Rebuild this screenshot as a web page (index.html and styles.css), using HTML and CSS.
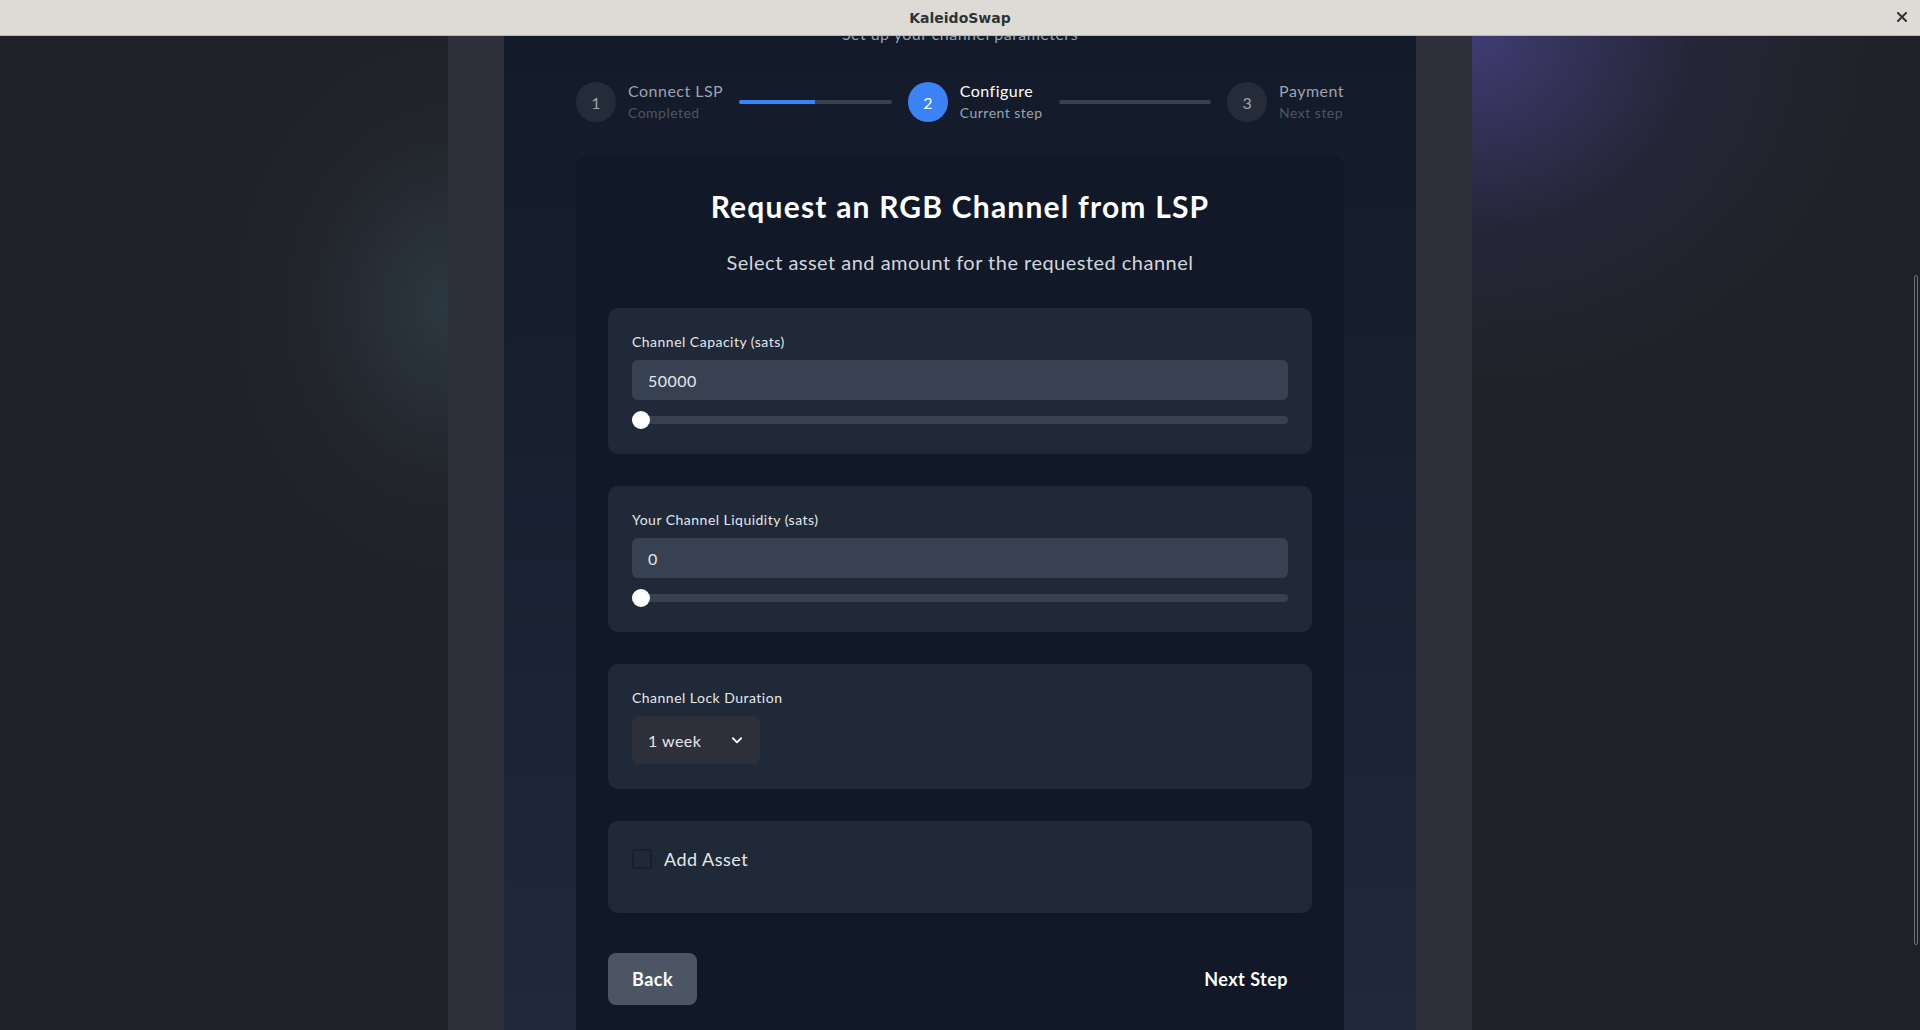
FILE: index.html
```html
<!DOCTYPE html>
<html lang="en">
<head>
<meta charset="utf-8">
<title>KaleidoSwap</title>
<link rel="stylesheet" href="styles.css">
</head>
<body>
<header class="titlebar">
  <span class="titlebar-title">KaleidoSwap</span>
  <button class="titlebar-close" aria-label="Close">
    <svg width="10" height="10" viewBox="0 0 10 10"><path d="M1 1 L9 9 M9 1 L1 9" stroke="#2e3436" stroke-width="2" stroke-linecap="square"/></svg>
  </button>
</header>
<div class="desktop">
  <div class="backdrop backdrop-left"></div>
  <div class="shell">
    <main class="panel">
      <div class="panel-content">
        <p class="page-subtitle">Set up your channel parameters</p>
        <ol class="stepper">
          <li class="step step-done">
            <span class="step-circle">1</span>
            <span class="step-text"><span class="step-name">Connect LSP</span><span class="step-state">Completed</span></span>
          </li>
          <li class="step-line"><span class="step-line-fill"></span></li>
          <li class="step step-current">
            <span class="step-circle">2</span>
            <span class="step-text"><span class="step-name">Configure</span><span class="step-state">Current step</span></span>
          </li>
          <li class="step-line"></li>
          <li class="step step-next">
            <span class="step-circle">3</span>
            <span class="step-text"><span class="step-name">Payment</span><span class="step-state">Next step</span></span>
          </li>
        </ol>
        <section class="card">
          <h1 class="card-title">Request an RGB Channel from LSP</h1>
          <p class="card-subtitle">Select asset and amount for the requested channel</p>

          <div class="field-box">
            <label class="field-label">Channel Capacity (sats)</label>
            <div class="text-input">50000</div>
            <div class="slider"><span class="slider-track"></span><span class="slider-thumb"></span></div>
          </div>

          <div class="field-box">
            <label class="field-label">Your Channel Liquidity (sats)</label>
            <div class="text-input">0</div>
            <div class="slider"><span class="slider-track"></span><span class="slider-thumb"></span></div>
          </div>

          <div class="field-box">
            <label class="field-label">Channel Lock Duration</label>
            <div class="select">
              <span>1 week</span>
              <svg width="14" height="14" viewBox="0 0 24 24" fill="none"><path d="M5 9 L12 16 L19 9" stroke="#ffffff" stroke-width="3.2" stroke-linecap="round" stroke-linejoin="round"/></svg>
            </div>
          </div>

          <div class="field-box field-box-asset">
            <div class="check-row">
              <span class="checkbox"></span>
              <span class="check-label">Add Asset</span>
            </div>
          </div>

          <div class="actions">
            <button class="btn btn-back">Back</button>
            <button class="btn btn-next">Next Step</button>
          </div>
        </section>
      </div>
    </main>
  </div>
  <div class="backdrop backdrop-right"></div>
  <div class="scrollbar"></div>
</div>
</body>
</html>
```
FILE: styles.css
```css
* { box-sizing: border-box; }
html, body { margin: 0; padding: 0; }
body {
  width: 1920px;
  height: 1030px;
  overflow: hidden;
  background: #202126;
  font-family: "Lato", "Noto Sans", sans-serif;
  letter-spacing: 0.03em;
  color: #e5e7eb;
}
p, h1, ol { margin: 0; padding: 0; }
ol { list-style: none; }
button { font-family: inherit; letter-spacing: inherit; border: 0; cursor: pointer; }

.titlebar {
  position: relative;
  height: 36px;
  background: #dedbd7;
  border-bottom: 1px solid #bdb7b0;
  display: flex;
  align-items: center;
  justify-content: center;
  letter-spacing: 0;
}
.titlebar-title {
  font-family: "DejaVu Sans", sans-serif;
  font-weight: bold;
  font-size: 14px;
  color: #2e3436;
}
.titlebar-close {
  position: absolute;
  right: 13px;
  top: 12px;
  width: 10px;
  height: 10px;
  padding: 0;
  background: transparent;
  display: flex;
}

.desktop {
  position: relative;
  display: flex;
  height: 994px;
}
.backdrop { flex: 1; }
.backdrop-left {
  background:
    radial-gradient(ellipse 260px 320px at 450px 270px, rgba(46, 60, 70, 0.85), rgba(38, 44, 54, 0.35) 55%, rgba(32, 33, 38, 0) 100%),
    #202126;
}
.backdrop-right {
  background:
    radial-gradient(ellipse 430px 380px at 0 0, rgba(64, 60, 115, 1), rgba(45, 42, 75, 0.5) 50%, rgba(32, 33, 38, 0) 100%),
    #202126;
}
.shell {
  width: 1024px;
  background: #2e2f3a;
  padding: 0 56px;
}
.panel {
  height: 100%;
  overflow: hidden;
  background: linear-gradient(to bottom, #131a2a, #1f2939);
  padding: 0 72px;
}
.panel-content { margin-top: -14px; }

.page-subtitle {
  text-align: center;
  font-size: 16px;
  line-height: 24px;
  color: #9ca3af;
}

.stepper {
  margin-top: 36px;
  display: flex;
  align-items: center;
  height: 40px;
}
.step { display: flex; align-items: center; gap: 12px; }
.step-circle {
  width: 40px;
  height: 40px;
  border-radius: 50%;
  background: #242c3a;
  color: #9ca3af;
  display: flex;
  align-items: center;
  justify-content: center;
  font-size: 16px;
  letter-spacing: 0;
}
.step-current .step-circle { background: #3b82f6; color: #ffffff; }
.step-text { display: flex; flex-direction: column; }
.step-name { font-size: 16px; line-height: 22px; color: #9ca3af; }
.step-state { font-size: 14px; line-height: 22px; color: #4b5563; }
.step-current .step-name { color: #ffffff; }
.step-current .step-state { color: #9ca3af; }
.step-line {
  flex: 1;
  height: 4px;
  margin: 0 16px;
  background: #374151;
  border-radius: 2px;
  display: flex;
}
.step-line-fill { width: 50%; background: #3b82f6; border-radius: 2px 0 0 2px; }

.card {
  margin-top: 34px;
  background: #111827;
  border-radius: 12px;
  padding: 32px 32px 60px;
}
.card-title {
  text-align: center;
  font-size: 30px;
  line-height: 36px;
  font-weight: 700;
  letter-spacing: 0.04em;
  color: #ffffff;
}
.card-subtitle {
  margin-top: 24px;
  text-align: center;
  font-size: 20px;
  line-height: 28px;
  color: #d1d5db;
  margin-bottom: 32px;
}

.field-box {
  background: #1f2937;
  border-radius: 10px;
  padding: 24px 24px 25px;
  margin-bottom: 32px;
}
.field-box-asset { padding: 24px 24px 40px; }
.field-label {
  display: block;
  font-size: 14px;
  line-height: 20px;
  color: #e5e7eb;
  margin-bottom: 8px;
}
.text-input {
  height: 40px;
  background: #374151;
  border-radius: 6px;
  padding: 0 16px;
  display: flex;
  align-items: center;
  font-size: 16px;
  color: #e5e7eb;
}
.slider {
  position: relative;
  margin-top: 11px;
  height: 18px;
  display: flex;
  align-items: center;
}
.slider-track {
  flex: 1;
  height: 8px;
  background: #374151;
  border-radius: 4px;
}
.slider-thumb {
  position: absolute;
  left: 0;
  top: 0;
  width: 18px;
  height: 18px;
  border-radius: 50%;
  background: #ffffff;
}
.select {
  width: 128px;
  height: 48px;
  background: #2d2f3a;
  border-radius: 6px;
  padding: 0 16px;
  display: flex;
  align-items: center;
  justify-content: space-between;
  font-size: 16px;
  color: #e5e7eb;
}
.check-row {
  display: flex;
  align-items: center;
  gap: 12px;
  height: 28px;
}
.checkbox {
  width: 20px;
  height: 20px;
  border: 2px solid #18202c;
  border-radius: 3px;
  background: #1f2937;
}
.check-label { font-size: 18px; color: #e5e7eb; }

.actions {
  margin-top: 40px;
  display: flex;
  justify-content: space-between;
  align-items: center;
}
.btn {
  height: 52px;
  padding: 0 24px;
  border-radius: 8px;
  font-size: 18px;
  font-weight: 700;
  color: #ffffff;
}
.btn-back { background: #4b5563; }
.btn-next { background: transparent; }

.scrollbar {
  position: absolute;
  right: 2px;
  top: 239px;
  width: 4px;
  height: 670px;
  border: 1px solid #6f7075;
  border-radius: 2px;
}
```
